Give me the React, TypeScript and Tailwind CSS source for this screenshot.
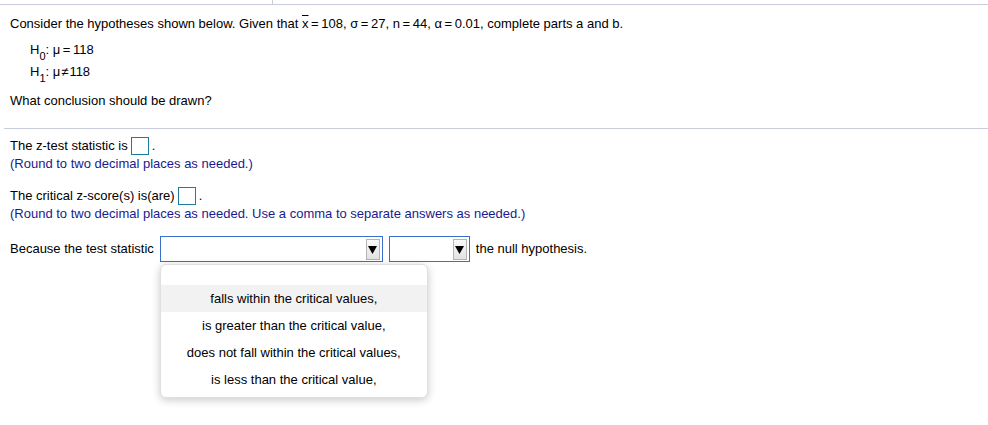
import React from "react";

const options = [
  "falls within the critical values,",
  "is greater than the critical value,",
  "does not fall within the critical values,",
  "is less than the critical value,",
];

function AnswerBox() {
  return <span className="inline-block w-[18px] h-[18px] border border-[#1a7d9c] bg-white align-middle mx-[3px]" />;
}

function SelectArrow() {
  return (
    <div className="w-[14px] h-[21px] border border-[#b4b4b4] bg-gradient-to-b from-[#fafafa] to-[#e2e2e2] flex items-center justify-center mr-[2px]">
      <svg width="9" height="9" viewBox="0 0 9 9">
        <path d="M0 1 L9 1 L4.5 9 Z" fill="#000" />
      </svg>
    </div>
  );
}

const eq = "\u2009=\u2009";

export default function App() {
  return (
    <div className="w-[988px] h-[425px] bg-white text-black text-[13px] font-['Liberation_Sans',Arial,sans-serif]">
      <div className="h-[4px] ml-[272px] w-px bg-[#c9ccda]" />
      <div className="h-px bg-[#c9ccda]" />

      <div className="pl-[10px] pt-[9px]">
        <div className="leading-[20px]">
          Consider the hypotheses shown below. Given that <span className="overline">x</span>
          {`${eq}108, σ${eq}27, n${eq}44, α${eq}0.01, complete parts a and b.`}
        </div>
        <div className="pl-[20px] pt-[5px] leading-[22px]">
          <div>
            H<sub className="text-[11px] align-[-3px]">0</sub>: μ{eq}118
          </div>
          <div>
            H<sub className="text-[11px] align-[-3px]">1</sub>: μ<span className="mx-[1px]">≠</span>118
          </div>
        </div>
        <div className="pt-[8px] leading-[20px]">What conclusion should be drawn?</div>
      </div>

      <div className="mt-[17px] ml-[4px] h-px bg-[#c9ccda]" />

      <div className="pl-[10px] pt-[7px]">
        <div className="leading-[19px] flex items-center">
          The z-test statistic is
          <AnswerBox />.
        </div>
        <div className="leading-[18px] text-[#1a1a8e]">(Round to two decimal places as needed.)</div>

        <div className="pt-[13px] leading-[19px] flex items-center">
          The critical z-score(s) is(are)
          <AnswerBox />.
        </div>
        <div className="leading-[18px] text-[#1a1a8e]">
          (Round to two decimal places as needed. Use a comma to separate answers as needed.)
        </div>

        <div className="pt-[13px] flex items-center gap-[6px]">
          <span>Because the test statistic</span>
          <div className="relative">
            <div className="w-[223px] h-[26px] border border-[#3a6fd0] bg-white flex items-center justify-end">
              <SelectArrow />
            </div>
            <div className="absolute left-0 top-[28px] w-[268px] bg-white border border-[#e0e0e0] rounded-[6px] shadow-[0_2px_8px_rgba(0,0,0,0.22)] pb-[4px]">
              <div className="h-[20px]" />
              {options.map((o, i) => (
                <div
                  key={o}
                  className={`h-[27px] flex items-center justify-center ${i === 0 ? "bg-[#f2f2f2]" : ""}`}
                >
                  {o}
                </div>
              ))}
            </div>
          </div>
          <div className="w-[81px] h-[26px] border border-[#3a6fd0] bg-white flex items-center justify-end">
            <SelectArrow />
          </div>
          <span>the null hypothesis.</span>
        </div>
      </div>
    </div>
  );
}
